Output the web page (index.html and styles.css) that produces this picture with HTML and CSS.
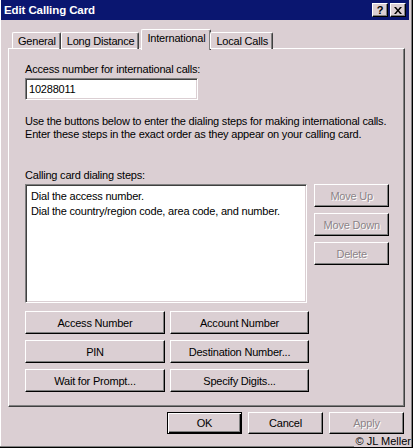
FILE: index.html
```html
<!DOCTYPE html>
<html>
<head>
<meta charset="utf-8">
<link rel="stylesheet" href="styles.css">
</head>
<body>
<div class="window">
  <div class="titlebar">
    <span class="title">Edit Calling Card</span>
    <div class="caption-btns">
      <span class="cbtn">?</span>
      <span class="cbtn cbtn-close">
        <svg width="8" height="7" viewBox="0 0 8 7"><path d="M0 0h2l2 2.5L6 0h2L5 3.5 8 7H6L4 4.5 2 7H0l3-3.5z" fill="#000"/></svg>
      </span>
    </div>
  </div>
  <div class="dialog">
    <div class="tabs">
      <div class="tab">General</div>
      <div class="tab">Long Distance</div>
      <div class="tab tab-active">International</div>
      <div class="tab">Local Calls</div>
    </div>
    <div class="panel">
      <div class="label">Access number for international calls:</div>
      <div class="input">10288011</div>
      <p class="help">Use the buttons below to enter the dialing steps for making international calls.<br>Enter these steps in the exact order as they appear on your calling card.</p>
      <div class="label label-steps">Calling card dialing steps:</div>
      <div class="steps-row">
        <div class="listbox">
          <div class="item">Dial the access number.</div>
          <div class="item">Dial the country/region code, area code, and number.</div>
        </div>
        <div class="side-btns">
          <div class="btn btn-disabled">Move Up</div>
          <div class="btn btn-disabled">Move Down</div>
          <div class="btn btn-disabled">Delete</div>
        </div>
      </div>
      <div class="step-btns">
        <div class="btn">Access Number</div>
        <div class="btn">Account Number</div>
        <div class="btn">PIN</div>
        <div class="btn">Destination Number...</div>
        <div class="btn">Wait for Prompt...</div>
        <div class="btn">Specify Digits...</div>
      </div>
    </div>
    <div class="footer">
      <div class="btn btn-default">OK</div>
      <div class="btn btn-foot">Cancel</div>
      <div class="btn btn-foot btn-disabled">Apply</div>
    </div>
  </div>
  <div class="credit">© JL Meller</div>
</div>
</body>
</html>
```

FILE: styles.css
```css
html, body {
  margin: 0;
  padding: 0;
  background: #dbcfd3;
}
body {
  font-family: "Liberation Sans", Arial, sans-serif;
  font-size: 11px;
  letter-spacing: -0.2px;
  color: #000;
}
.window {
  position: relative;
  width: 413px;
  height: 448px;
  box-sizing: border-box;
  background: #dbcfd3;
  border-right: 1px solid #000;
  border-bottom: 1px solid #000;
  box-shadow: inset -1px -1px #808080, inset 1px 0 #fff;
  padding: 0 3px 0 1px;
  overflow: hidden;
}
.titlebar {
  height: 20px;
  background: #0a1670;
  display: flex;
  align-items: center;
  justify-content: space-between;
  padding: 0 3px 0 3px;
}
.title {
  color: #fff;
  font-weight: bold;
  font-size: 11.5px;
  letter-spacing: -0.1px;
}
.caption-btns {
  display: flex;
  gap: 2px;
}
.cbtn {
  width: 16px;
  height: 14px;
  box-sizing: border-box;
  background: #dbcfd3;
  border: 1px solid;
  border-color: #fff #000 #000 #fff;
  box-shadow: inset -1px -1px #808080;
  display: flex;
  align-items: center;
  justify-content: center;
  font-weight: bold;
  font-size: 11px;
  line-height: 1;
}
.dialog {
  padding: 9px 4px 0 7px;
}
.tabs {
  display: flex;
  height: 20px;
  padding-left: 4px;
  position: relative;
  z-index: 2;
}
.tab {
  margin-top: 3px;
  height: 17px;
  box-sizing: border-box;
  padding: 2px 4px 0 5px;
  border-top: 1px solid #fff;
  border-left: 1px solid #fff;
  border-right: 1px solid #404040;
  box-shadow: inset -1px 0 #808080;
  border-radius: 2px 2px 0 0;
  white-space: nowrap;
}
.tab-active {
  margin: 0 -1px 0 2px;
  height: 21px;
  padding: 2px 5px 0 5px;
  background: #dbcfd3;
}
.panel {
  height: 359px;
  box-sizing: border-box;
  border-top: 1px solid #fff;
  border-left: 1px solid #fff;
  border-right: 1px solid #404040;
  border-bottom: 1px solid #404040;
  box-shadow: inset -1px -1px #808080;
  padding: 13px 15px 0 16px;
  margin-top: -1px;
}
.label {
  line-height: 14px;
  white-space: nowrap;
}
.input {
  margin-top: 2px;
  width: 173px;
  height: 22px;
  box-sizing: border-box;
  background: #fff;
  border: 1px solid;
  border-color: #808080 #fff #fff #808080;
  box-shadow: inset 1px 1px #404040, inset -1px -1px #dbcfd3;
  padding: 4px 3px 0 3px;
  line-height: 13px;
}
.help {
  margin: 15px 0 0 0;
  line-height: 13px;
  white-space: nowrap;
}
.label-steps {
  margin-top: 27px;
}
.steps-row {
  display: flex;
  gap: 7px;
  margin-top: 2px;
}
.listbox {
  width: 284px;
  height: 119px;
  box-sizing: border-box;
  background: #fff;
  border: 1px solid;
  border-color: #808080 #fff #fff #808080;
  box-shadow: inset 1px 1px #404040, inset -1px -1px #dbcfd3;
  padding: 4px 5px;
}
.item {
  line-height: 15px;
  white-space: nowrap;
}
.side-btns {
  display: flex;
  flex-direction: column;
  gap: 6px;
  width: 75px;
}
.btn {
  height: 23px;
  box-sizing: border-box;
  border: 1px solid;
  border-color: #fff #000 #000 #fff;
  box-shadow: inset -1px -1px #808080;
  display: flex;
  align-items: center;
  justify-content: center;
  white-space: nowrap;
  background: #dbcfd3;
}
.btn-disabled {
  color: #8c8488;
  text-shadow: 1px 1px #fff;
}
.step-btns {
  display: grid;
  grid-template-columns: 140px 139px;
  column-gap: 5px;
  row-gap: 6px;
  margin-top: 8px;
}
.footer {
  display: flex;
  justify-content: flex-end;
  gap: 6px;
  margin-top: 5px;
  padding-right: 1px;
}
.btn-foot, .btn-default {
  width: 75px;
  height: 22px;
}
.btn-default {
  border: 1px solid #000;
  box-shadow: inset 1px 1px #fff, inset -1px -1px #000, inset -2px -2px #808080;
}
.credit {
  position: absolute;
  right: 1px;
  bottom: 0;
  font-size: 11px;
  line-height: 11px;
  letter-spacing: 0;
  background: #dbcfd3;
  padding-left: 2px;
}
```
